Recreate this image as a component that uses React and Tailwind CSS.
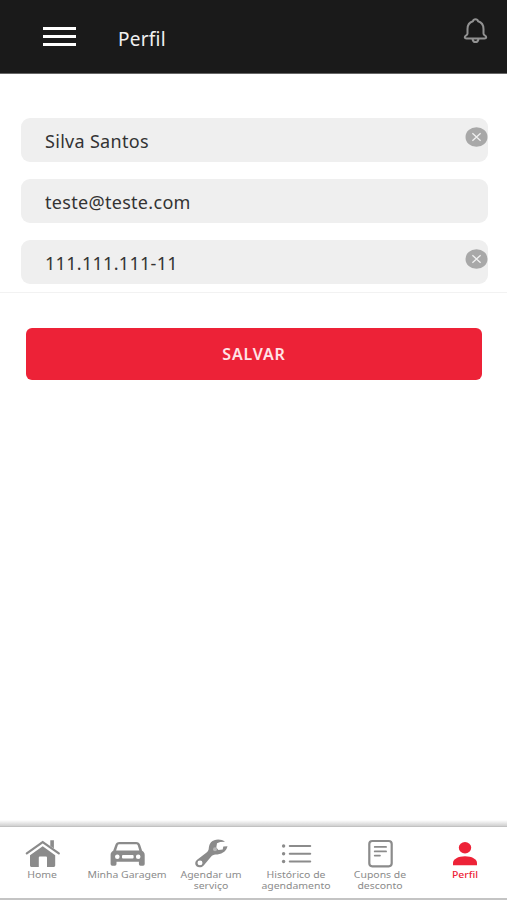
import React, { useState } from "react";

const HomeIcon = () => (
  <svg viewBox="0 0 36 30" className="w-9 h-[30px]" fill="none">
    <path d="M26.3 2.2h3.6v8.4l-3.6-2.6z" fill="currentColor" />
    <path d="M2.800 15.300 18.700 4 34.800 15.300" stroke="currentColor" strokeWidth="2.200" strokeLinecap="round" />
    <path
      d="M6 17.200 18.700 8.200 31.200 17.200V27.600a1.300 1.300 0 0 1-1.300 1.300H23V19.400a1 1 0 0 0-1-1h-6.200a1 1 0 0 0-1 1v9.500H7.300A1.300 1.300 0 0 1 6 27.600z"
      fill="currentColor"
    />
  </svg>
);

const CarIcon = () => (
  <svg viewBox="0 0 36 30" className="w-9 h-[30px]" fill="none">
    <path
      fillRule="evenodd"
      d="M10.5 4h16.6c2.2 0 3.5 1.1 4.100 3l1.900 5.800c1.600.8 2.600 2.300 2.600 4.200v9.100a1.600 1.600 0 0 1-1.600 1.600h-2.600a1.600 1.600 0 0 1-1.600-1.600v-2.300H7.500v2.300a1.600 1.600 0 0 1-1.600 1.600H3.200a1.600 1.600 0 0 1-1.600-1.600v-9.100c0-1.900 1-3.400 2.600-4.200L6.300 7c.6-1.900 2-3 4.200-3zM10.600 6.200c-1 0-1.600.5-1.900 1.400L7.100 12.600h23.200l-1.500-5c-.3-.9-.9-1.400-1.900-1.400zM8.300 16.400a2.300 2.300 0 1 0 0 4.600 2.300 2.300 0 0 0 0-4.600zM29.200 16.400a2.300 2.300 0 1 0 0 4.600 2.300 2.300 0 0 0 0-4.600zM14 17a1 1 0 0 0-1 1v1.600a1 1 0 0 0 1 1h9.600a1 1 0 0 0 1-1V18a1 1 0 0 0-1-1z"
      fill="currentColor"
    />
  </svg>
);

const WrenchIcon = () => (
  <svg viewBox="0 0 36 30" className="w-9 h-[30px]" fill="none">
    <path
      fillRule="evenodd"
      d="M32 3.800C28.500.600 21.500.500 18 4.200c-2 2.200-2 4.600-2.300 6.700-.2 1.500-1 2.500-2.100 3.500L4.100 21.700c-2.300 1.900-2.500 4.900-.6 6.500 2 1.700 5.400 1.300 7.200-.8l7.300-8.700c1.200-1.300 2.500-1.900 4.500-2.100 5.300-.2 10.800-2.600 12-8.400l-4.200.2-.6 3.200-4.300.5-2.100-2.700.700-4.100 3.200-1.300zM7 22.600a2.500 2.300 0 1 1 0 4.600 2.500 2.300 0 0 1 0-4.600z"
      fill="currentColor"
    />
    <circle cx="22" cy="11.200" r="2" fill="#b8b8b8" />
  </svg>
);

const ListIcon = () => (
  <svg viewBox="0 0 36 30" className="w-9 h-[30px]" fill="none">
    <g fill="currentColor">
      <circle cx="5.600" cy="8" r="1.700" />
      <circle cx="5.600" cy="15.800" r="1.700" />
      <circle cx="5.600" cy="23.500" r="1.700" />
    </g>
    <path d="M11.800 8h20.400M11.800 15.800h20.400M11.800 23.500h20.400" stroke="currentColor" strokeWidth="2.100" strokeLinecap="round" />
  </svg>
);

const CouponIcon = () => (
  <svg viewBox="0 0 36 30" className="w-9 h-[30px]" fill="none" stroke="currentColor" strokeLinecap="round">
    <rect x="7.300" y="3" width="22.400" height="25.300" rx="3" strokeWidth="2.200" />
    <path d="M12.700 8.900h11.400M12.700 13.400h11.400M12.700 17.600h5.300" strokeWidth="1.700" />
  </svg>
);

const PersonIcon = () => (
  <svg viewBox="0 0 36 30" className="w-9 h-[30px]" fill="currentColor">
    <ellipse cx="18" cy="9.800" rx="6.200" ry="5.700" />
    <path d="M6 27.200v-2.100c0-4 5.200-6.800 12-6.800s12 2.800 12 6.800v2.100z" />
  </svg>
);

const BellIcon = () => (
  <svg viewBox="0 0 26 27" className="w-[26px] h-[27px]" fill="none" stroke="currentColor" strokeWidth="2" strokeLinejoin="round">
    <path d="M12.500 2.200c-1.400 0-2.300 1-2.600 2.100C6.300 5.400 4.500 8.300 4.500 12v4.500c0 .9-.5 1.400-1.300 1.900-2.200 1.300-1.700 3 .2 3h18.200c1.900 0 2.400-1.700.2-3-.8-.5-1.300-1-1.300-1.900V12c0-3.700-1.800-6.600-5.400-7.700-.3-1.100-1.200-2.100-2.600-2.100z" />
    <path d="M9.500 21.600c.2 2.200 1.300 3.500 3 3.500s2.800-1.300 3-3.500" />
  </svg>
);

const tabs = [
  { label: "Home", icon: HomeIcon },
  { label: "Minha Garagem", icon: CarIcon },
  { label: "Agendar um serviço", icon: WrenchIcon },
  { label: "Histórico de agendamento", icon: ListIcon },
  { label: "Cupons de desconto", icon: CouponIcon },
  { label: "Perfil", icon: PersonIcon, active: true },
];

const Field = ({ name, type, value, onChange, onClear }) => (
  <div className="relative h-11">
    <input
      name={name}
      type={type}
      value={value}
      onChange={onChange}
      aria-label={name}
      className="block w-full h-full rounded-[9px] bg-[#efefef] pl-6 pr-8 pt-px text-[18px] tracking-[0.3px] text-[#333] outline-none"
    />
    {onClear && (
      <button
        type="button"
        onClick={onClear}
        aria-label="Limpar"
        className="absolute right-0 top-[9px] w-[23px] h-5"
      >
        <svg viewBox="0 0 23 20" className="w-full h-full">
          <ellipse cx="11.500" cy="10" rx="11" ry="9.800" fill="#a8a8a8" />
          <path d="M7.400 6.200l8.200 7.600M15.600 6.200l-8.200 7.600" stroke="#f0f0f0" strokeWidth="1.300" />
        </svg>
      </button>
    )}
  </div>
);

const App = () => {
  const [form, setForm] = useState({
    nome: "Silva Santos",
    email: "teste@teste.com",
    cpf: "111.111.111-11",
  });

  const handleChange = (e) => {
    setForm({ ...form, [e.target.name]: e.target.value });
  };

  const clearField = (name) => setForm({ ...form, [name]: "" });

  return (
    <div className="flex flex-col h-[900px] w-full bg-white font-['Noto_Sans','Open_Sans',sans-serif] overflow-hidden">
      <header className="flex h-[74px] shrink-0 bg-[#1a1a1a] border-b border-[#666] pl-[43px] pr-[18px]">
        <button type="button" aria-label="Menu" className="flex flex-col gap-[5px] mt-[27px] w-[33px]">
          <span className="h-[3px] w-full bg-white" />
          <span className="h-[3px] w-full bg-white" />
          <span className="h-[3px] w-full bg-white" />
        </button>
        <h1 className="ml-[42px] mt-[25px] text-[19px] tracking-[0.25px] leading-7 text-[#f0f0f0]">Perfil</h1>
        <button type="button" aria-label="Notificações" className="ml-auto mt-[17px] h-[27px] text-[#929292]">
          <BellIcon />
        </button>
      </header>

      <main className="flex-1">
        <form onSubmit={(e) => e.preventDefault()}>
          <div className="flex flex-col gap-[17px] pl-[21px] pr-[19px] pt-11 pb-2 border-b border-[#f2f2f2]">
            <Field name="nome" type="text" value={form.nome} onChange={handleChange} onClear={() => clearField("nome")} />
            <Field name="email" type="text" value={form.email} onChange={handleChange} />
            <Field name="cpf" type="text" value={form.cpf} onChange={handleChange} onClear={() => clearField("cpf")} />
          </div>
          <div className="pl-[26px] pr-[25px] pt-[35px]">
            <button
              type="submit"
              className="block w-full h-[52px] rounded-[6px] bg-[#ed2237] text-[16px] font-semibold tracking-[0.8px] text-[#ffe3e6]"
            >
              SALVAR
            </button>
          </div>
        </form>
      </main>

      <div className="h-[6px] shrink-0 bg-gradient-to-b from-white to-[#d0d0d0]" />
      <nav className="grid grid-cols-6 h-[74px] shrink-0 border-t border-t-[#c2c2c2] border-b-2 border-b-[#c4c4c4] pt-[11px]">
        {tabs.map(({ label, icon: Icon, active }) => (
          <a
            key={label}
            href="#"
            className={`flex flex-col items-center text-center ${active ? "text-[#ed2237] font-medium" : "text-[#8b8b8b]"}`}
          >
            <Icon />
            <span className="w-[70px] mt-px flex justify-center text-[9.5px] leading-[11px] scale-x-110">
              <span className={label === "Minha Garagem" ? "whitespace-nowrap" : ""}>{label}</span>
            </span>
          </a>
        ))}
      </nav>
    </div>
  );
};

export default App;
